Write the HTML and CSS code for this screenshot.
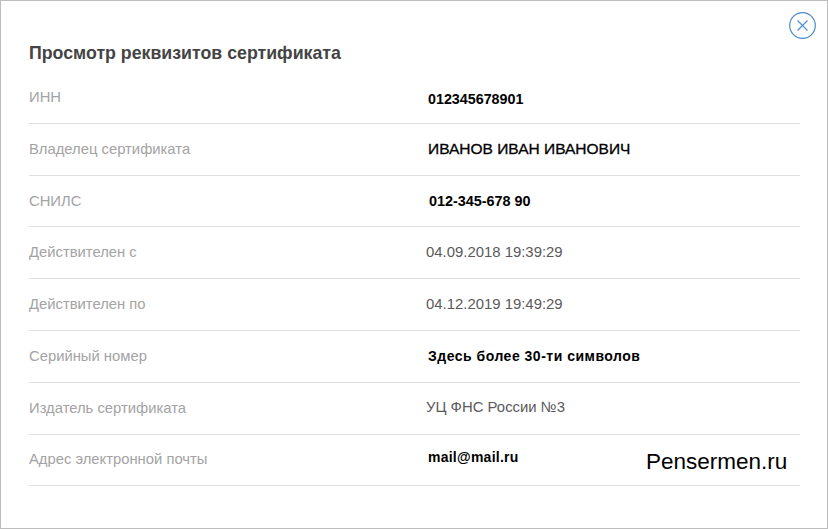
FILE: index.html
```html
<!DOCTYPE html>
<html lang="ru">
<head>
<meta charset="utf-8">
<title>Просмотр реквизитов сертификата</title>
<link rel="stylesheet" href="styles.css">
</head>
<body>
<div class="modal">
  <button class="close" aria-label="Закрыть">
    <svg width="27" height="27" viewBox="0 0 27 27"><circle cx="13.5" cy="13.5" r="12.8" fill="none" stroke="#4a8ad0" stroke-width="1.2"/><path d="M8.5 8.5L18.5 18.5M18.5 8.5L8.5 18.5" fill="none" stroke="#4f8fd6" stroke-width="1.15"/></svg>
  </button>
  <h1 class="title">Просмотр реквизитов сертификата</h1>
  <div class="rows">
    <div class="row"><div class="label">ИНН</div><div class="value pasted inn">012345678901</div></div>
    <div class="row"><div class="label">Владелец сертификата</div><div class="value pasted big">ИВАНОВ ИВАН ИВАНОВИЧ</div></div>
    <div class="row"><div class="label">СНИЛС</div><div class="value pasted snils">012-345-678 90</div></div>
    <div class="row"><div class="label">Действителен с</div><div class="value date">04.09.2018 19:39:29</div></div>
    <div class="row"><div class="label">Действителен по</div><div class="value date">04.12.2019 19:49:29</div></div>
    <div class="row"><div class="label">Серийный номер</div><div class="value pasted wide">Здесь более 30-ти символов</div></div>
    <div class="row"><div class="label">Издатель сертификата</div><div class="value">УЦ ФНС России №3</div></div>
    <div class="row"><div class="label label-last">Адрес электронной почты</div><div class="value pasted mail">mail@mail.ru</div><div class="mark">Pensermen.ru</div></div>
  </div>
</div>
</body>
</html>
```
FILE: styles.css
```css
html, body {
  margin: 0;
  padding: 0;
  background: #fff;
}
.modal {
  position: relative;
  box-sizing: border-box;
  width: 828px;
  height: 529px;
  border: 1px solid #bdbdbd;
  padding: 42px 27px 0 28px;
  font-family: "Liberation Sans", Arial, sans-serif;
}
.close {
  position: absolute;
  top: 11px;
  right: 11px;
  width: 27px;
  height: 27px;
  padding: 0;
  border: 0;
  background: none;
  display: block;
}
.close svg { display: block; }
.title {
  margin: 0;
  font-size: 17.75px;
  line-height: 20px;
  font-weight: 700;
  color: #444;
}
.rows {
  margin-top: 9px;
}
.row {
  box-sizing: border-box;
  height: 51.8px;
  border-bottom: 1px solid #dedede;
  display: flex;
  align-items: flex-start;
  padding-top: 14px;
  position: relative;
}
.label {
  width: 397px;
  flex: none;
  margin-top: 1px;
  font-size: 14.8px;
  line-height: 20px;
  color: #a3a3a3;
}
.label-last { margin-top: 0; }
.value {
  font-size: 14.9px;
  line-height: 20px;
  color: #5a5a5a;
}
.date { padding-top: 1px; }
.pasted {
  color: #000;
  font-weight: 700;
  margin-left: 2px;
}
.inn { font-size: 14.3px; padding-top: 3px; }
.big { font-weight: 400; font-size: 15.5px; -webkit-text-stroke: 0.3px #000; padding-top: 1px; }
.snils { font-size: 14.4px; padding-top: 1px; margin-left: 3px; }
.wide { font-size: 14px; letter-spacing: 0.5px; padding-top: 1px; }
.mail { font-size: 14px; letter-spacing: 0.25px; margin-top: -2px; }
.mark {
  position: absolute;
  left: 617px;
  top: 13px;
  font-size: 22.5px;
  line-height: 28px;
  color: #000;
}
```
